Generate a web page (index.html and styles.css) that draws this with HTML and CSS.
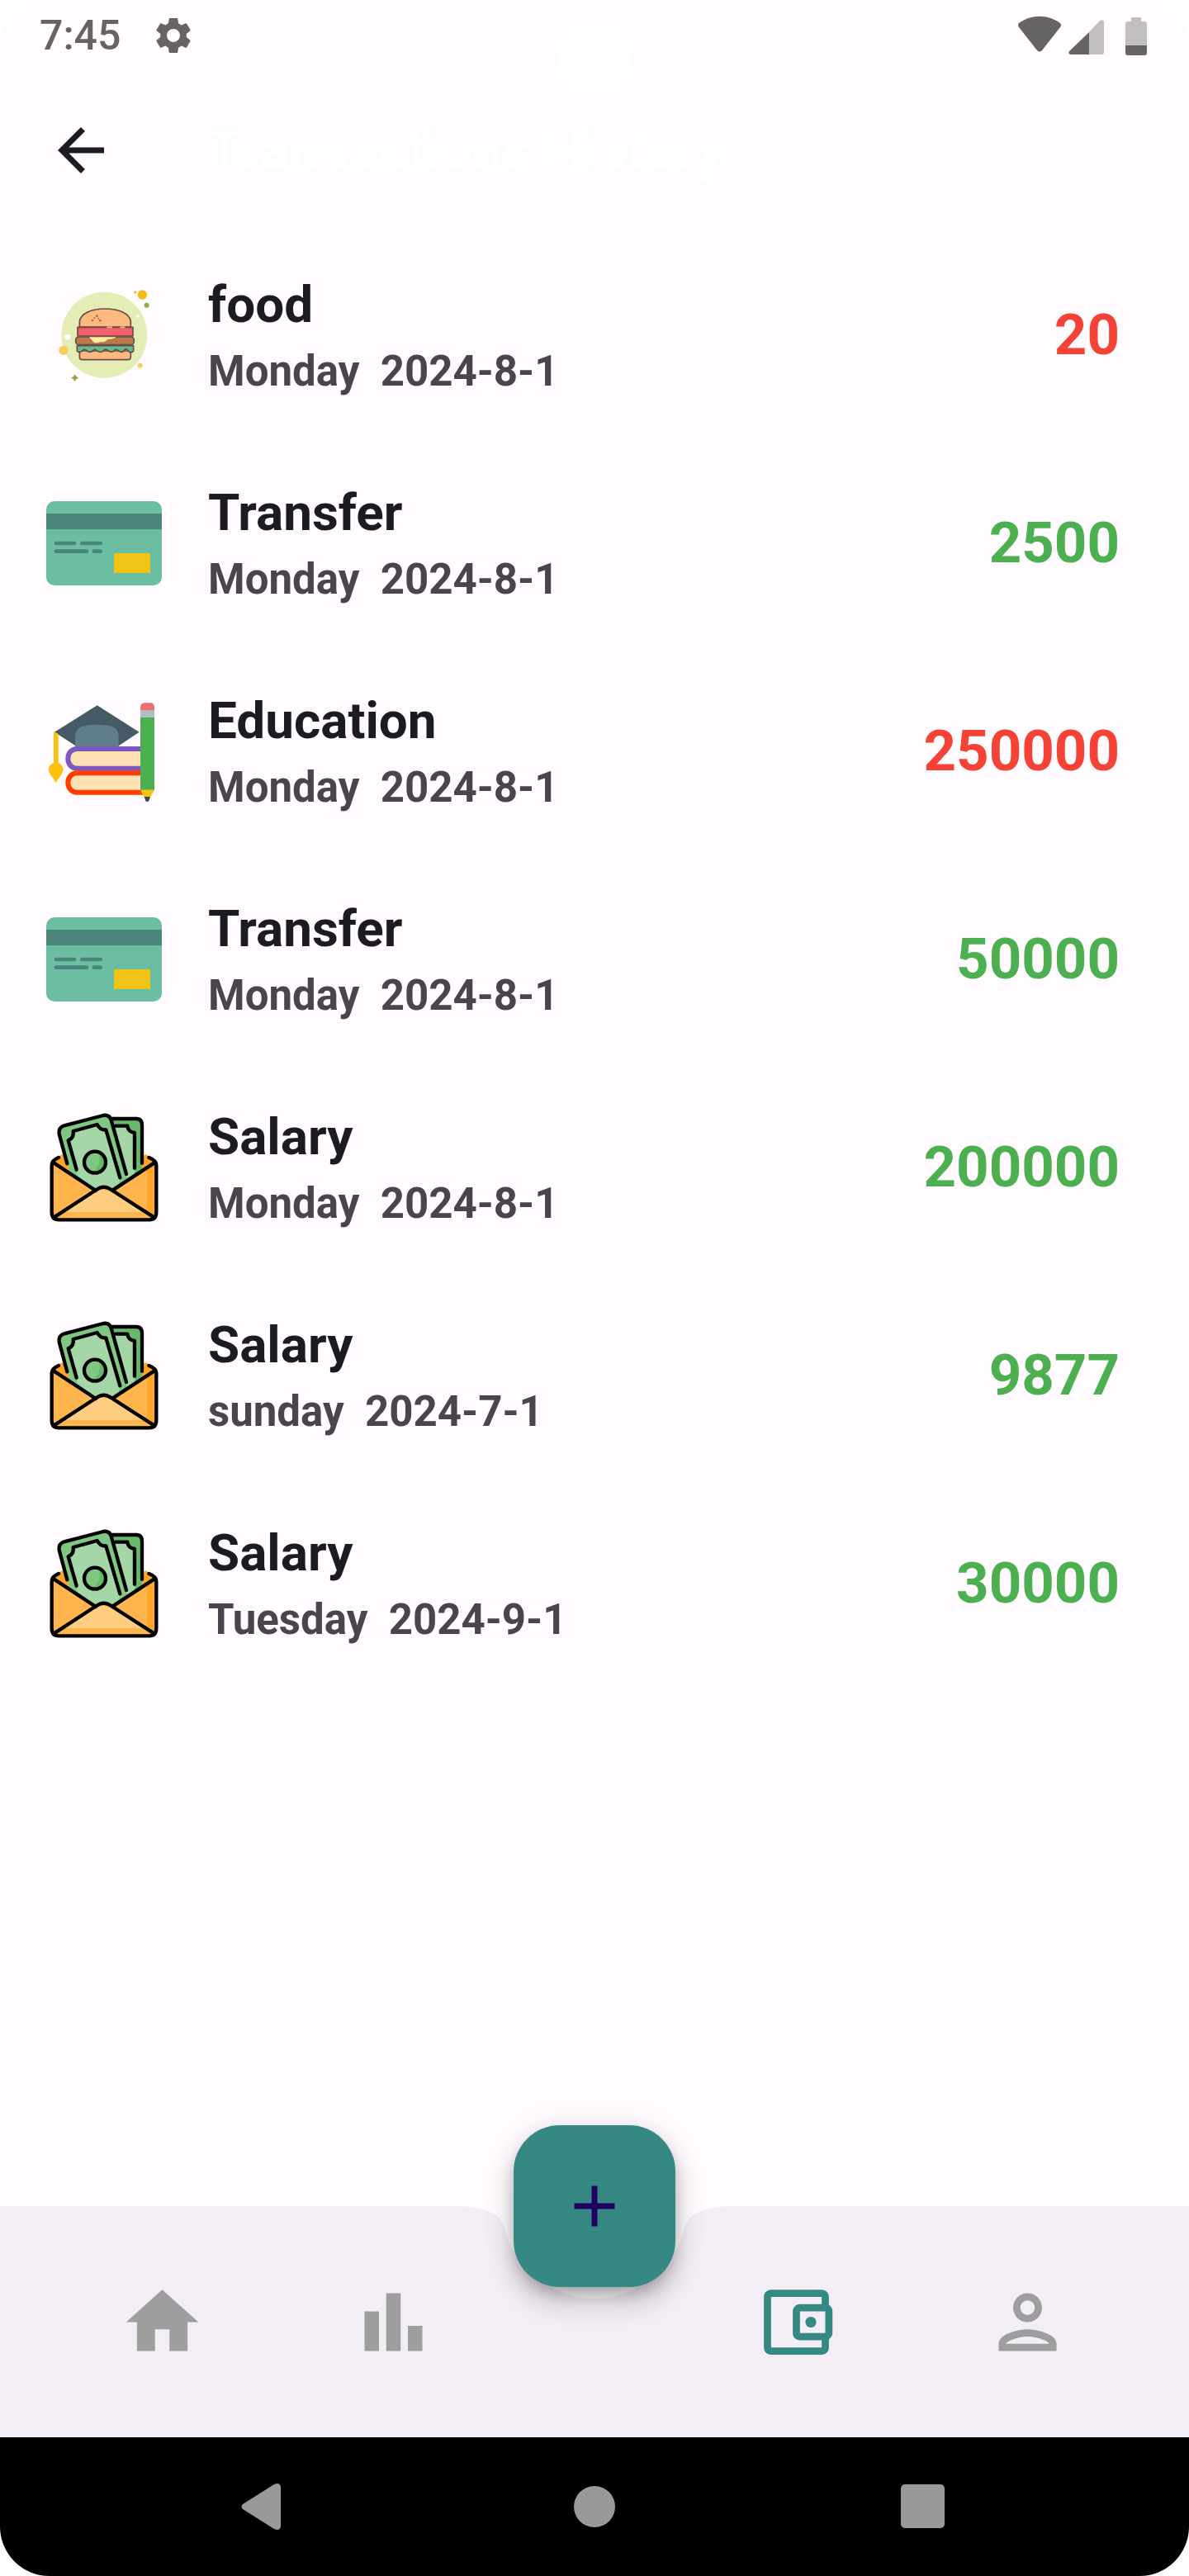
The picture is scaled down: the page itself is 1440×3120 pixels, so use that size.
FILE: index.html
```html
<!DOCTYPE html>
<html lang="en">
<head>
<meta charset="utf-8">
<meta name="viewport" content="width=device-width, initial-scale=1">
<title>Transactions History</title>
<link rel="stylesheet" href="styles.css">
</head>
<body>
<svg class="defs" aria-hidden="true">
  <symbol id="ic-food" viewBox="48 18 420 420">
    <circle cx="259" cy="227" r="156" fill="#e5edb7"/>
    <circle cx="397" cy="81" r="17" fill="#f1bc19"/>
    <circle cx="371" cy="72" r="5" fill="#f1bc19"/>
    <circle cx="413" cy="119" r="9" fill="#88ae45"/>
    <circle cx="380" cy="158" r="6" fill="#fff"/>
    <circle cx="125" cy="235" r="10" fill="#fff"/>
    <circle cx="111" cy="283" r="17" fill="#fbcd59"/>
    <circle cx="389" cy="338" r="9" fill="#fbcd59"/>
    <path d="M152 370l5 8 9 5-9 5-5 9-5-9-9-5 9-5z" fill="#88ae45"/>
    <g stroke="#6d4a48" stroke-width="5" stroke-linejoin="round">
      <path d="M169 198v-20c4-29 43-46 93-46s89 17 93 46v20z" fill="#fdb97e"/>
      <path d="M169 285h186v22q0 10-10 10H179q-10 0-10-10z" fill="#fdb97e"/>
      <path d="M160 266h205v20q-10 8-18 0-7-12-14-5-12 16-27 0-8-4-12 4-13 8-25-4-9-4-13 4-13 9-26-3-8-4-13 3-13 9-24-3-8-4-13 2-12 10-20 2z" fill="#60be92"/>
      <rect x="155" y="234" width="212" height="29" rx="12" fill="#b97948"/>
      <path d="M162 199h201v32H162z" fill="#f55e6f"/>
    </g>
    <path d="M204 235h98q-10 8-32 8-9 12-24 9-13 5-24 3z" fill="#fbee9c"/>
    <path d="M268 199h20M316 199h18" stroke="#fdb97e" stroke-width="5"/>
    <g fill="#a06a50"><circle cx="216" cy="174" r="4"/><circle cx="223" cy="165" r="3"/><circle cx="232" cy="158" r="4"/><circle cx="238" cy="167" r="3"/><circle cx="244" cy="175" r="4"/></g>
  </symbol>
  <symbol id="ic-card" viewBox="48 -6 420 420">
    <rect x="48" y="51" width="420" height="306" rx="30" fill="#6bbea2"/>
    <path d="M48 96h420v57H48z" fill="#49857a"/>
    <path d="M84 204h66M178 204h67M84 233h111M222 233h23" stroke="#49857a" stroke-width="14" stroke-linecap="round"/>
    <path d="M294 240h132v72H294z" fill="#f0c419"/>
  </symbol>
  <symbol id="ic-education" viewBox="48 30 420 420">
    <path d="M390 231H160c-44 0-44 71 0 71h230" fill="#ffe0b2" stroke="#7e57c2" stroke-width="18"/>
    <path d="M400 319H160c-44 0-44 70 0 70h240" fill="#ffe0b2" stroke="#ff3d00" stroke-width="18"/>
    <path d="M233 73L386 170 308 222H158L78 170z" fill="#455a64"/>
    <path d="M153 222v-38c4-30 20-41 79-41s76 11 79 41v38z" fill="#607d8b"/>
    <path d="M75 168l17 8v106q18 8 18 26-3 12-19 33l-8 14-8-14q-16-21-19-33 0-18 19-26z" fill="#ffc107"/>
    <path d="M390 380h51l-14 26h-24z" fill="#ffc107"/>
    <path d="M404 405h22l-6 17h-10z" fill="#37474f"/>
    <path d="M390 92V78q2-14 16-14h20q14 0 15 14v14z" fill="#e57373"/>
    <path d="M390 92h51v26h-51z" fill="#b0bec5"/>
    <path d="M390 117h51v263h-51z" fill="#4caf50"/>
  </symbol>
  <symbol id="ic-salary" viewBox="48 42 420 420">
    <path d="M68 236l34-30h308l38 30v190q-3 16-20 16H88q-17 0-20-16z" fill="#ffb54e"/>
    <path d="M68 236l38-32 30 68zM448 236l-38-32-24 66z" fill="#ffa327"/>
    <path d="M414 255l34-20v194q0 12-18 13H300l100-30q14-6 14-20z" fill="#ffa728"/>
    <path d="M284 75h92q20 2 20 24v164l-70 45z" fill="#66bb6a"/>
    <path d="M292 101h52q0 22 26 25v152l-40 22z" fill="#a5d6a7"/>
    <path d="M94 118q0-14 14-18l150-38q22-4 28 16l58 222-54 36h-62l-96-72z" fill="#81c784"/>
    <path d="M127 155q24-12 20-37l84-23q14 24 34 20l54 195-28 24h-62l-66-52z" fill="#a5d6a7"/>
    <path d="M318 290l-14 38 44-30z" fill="#81c784"/>
    <path d="M126 262l36 26-6-26z" fill="#81c784"/>
    <circle cx="225" cy="233" r="40" fill="#81c784"/>
    <path d="M234 195a40 40 0 0 1-26 76c34-10 42-52 26-76z" fill="#66bb6a"/>
    <path d="M74 438l156-104q26-22 54 0l160 104z" fill="#ffcc80"/>
    <path d="M108 414h300l34 26H76z" fill="#ffb54e"/>
    <g fill="none" stroke="#000" stroke-width="13" stroke-linecap="round" stroke-linejoin="round">
      <path d="M93 216q-25 10-25 28v170q0 28 26 28h328q26 0 26-28V244q0-18-27-28"/>
      <path d="M75 235l153 101M80 431l150-98q27-20 54 0l152 98M441 235L290 334"/>
      <path d="M124 238L95 130q-4-22 18-30l142-37q22-4 29 17l55 196"/>
      <path d="M158 260l-30-106q22-10 18-34l87-24q12 22 32 19l51 174"/>
      <path d="M287 75h90q19 1 19 24v137M301 101h42q2 22 26 25v128"/>
      <circle cx="225" cy="233" r="39"/>
    </g>
  </symbol>
</svg>

<div class="screen">
  <div class="status-bar">
    <span class="clock">7:45</span>
    <svg class="status-gear" viewBox="2 2 20 20" aria-hidden="true"><path d="M19.14 12.94c.04-.3.06-.61.06-.94 0-.32-.02-.64-.07-.94l2.03-1.58c.18-.14.23-.41.12-.61l-1.92-3.32c-.12-.22-.37-.29-.59-.22l-2.39.96c-.5-.38-1.03-.7-1.62-.94l-.36-2.54c-.04-.24-.24-.41-.48-.41h-3.84c-.24 0-.43.17-.47.41l-.36 2.54c-.59.24-1.13.57-1.62.94l-2.39-.96c-.22-.08-.47 0-.59.22L2.74 8.87c-.12.21-.08.47.12.61l2.03 1.58c-.05.3-.09.63-.09.94s.02.64.07.94l-2.03 1.58c-.18.14-.23.41-.12.61l1.92 3.32c.12.22.37.29.59.22l2.39-.96c.5.38 1.03.7 1.62.94l.36 2.54c.05.24.24.41.48.41h3.84c.24 0 .44-.17.47-.41l.36-2.54c.59-.24 1.13-.56 1.62-.94l2.39.96c.22.08.47 0 .59-.22l1.92-3.32c.12-.22.07-.47-.12-.61l-2.01-1.58zM12 15.6c-1.98 0-3.6-1.62-3.6-3.6s1.62-3.6 3.6-3.6 3.6 1.62 3.6 3.6-1.62 3.6-3.6 3.6z"/></svg>
    <svg class="status-signals" viewBox="0 0 158 48" aria-hidden="true">
      <path d="M2 9Q0 11 2 14L24 42Q27 45 30 42L52 14Q54 11 52 9C37-2 17-2 2 9z"/>
      <path class="faint" d="M87 20l13-14q5-2 5 2v36q0 3-3 3H87z"/>
      <path d="M87 20v27H65q-4-1-2-4z"/>
      <path class="faint" d="M138 2h12v5h4q3 0 3 3v26h-26V10q0-3 3-3h4z"/>
      <path d="M131 36h26v9q0 3-3 3h-20q-3 0-3-3z"/>
    </svg>
    <span class="camera" aria-hidden="true"></span>
  </div>

  <header class="app-bar">
    <button class="back" type="button" aria-label="Back"><svg viewBox="0 0 24 24" aria-hidden="true"><path d="M20 11H7.83l5.59-5.59L12 4l-8 8 8 8 1.41-1.41L7.83 13H20v-2z"/></svg></button>
    <h1>Transactions History</h1>
  </header>

  <main>
    <ul class="transactions">
      <li><svg aria-hidden="true"><use href="#ic-food"/></svg><div class="info"><h2>food</h2><p>Monday&nbsp; 2024-8-1</p></div><span class="amount expense">20</span></li>
      <li><svg aria-hidden="true"><use href="#ic-card"/></svg><div class="info"><h2>Transfer</h2><p>Monday&nbsp; 2024-8-1</p></div><span class="amount income">2500</span></li>
      <li><svg aria-hidden="true"><use href="#ic-education"/></svg><div class="info"><h2>Education</h2><p>Monday&nbsp; 2024-8-1</p></div><span class="amount expense">250000</span></li>
      <li><svg aria-hidden="true"><use href="#ic-card"/></svg><div class="info"><h2>Transfer</h2><p>Monday&nbsp; 2024-8-1</p></div><span class="amount income">50000</span></li>
      <li><svg aria-hidden="true"><use href="#ic-salary"/></svg><div class="info"><h2>Salary</h2><p>Monday&nbsp; 2024-8-1</p></div><span class="amount income">200000</span></li>
      <li><svg aria-hidden="true"><use href="#ic-salary"/></svg><div class="info"><h2>Salary</h2><p>sunday&nbsp; 2024-7-1</p></div><span class="amount income">9877</span></li>
      <li><svg aria-hidden="true"><use href="#ic-salary"/></svg><div class="info"><h2>Salary</h2><p>Tuesday&nbsp; 2024-9-1</p></div><span class="amount income">30000</span></li>
    </ul>
  </main>

  <nav class="bottom-bar" aria-label="Main">
    <svg class="notch" viewBox="0 0 336 112" aria-hidden="true"><path d="M0 0Q52.500 0 59.400 27.400A112 112 0 0 0 276.600 27.400Q283.500 0 336 0z"/></svg>
    <a href="#home" aria-label="Home"><svg viewBox="0 0 24 24"><path d="M10 20v-6h4v6h5v-8h3L12 3 2 12h3v8z"/></svg></a>
    <a href="#statistics" aria-label="Statistics"><svg viewBox="0 0 24 24"><path d="M4 9h4v11H4zm12 4h4v7h-4zm-6-9h4v16h-4z"/></svg></a>
    <span class="fab-space"></span>
    <a class="active" href="#wallet" aria-label="Wallet" aria-current="page"><svg viewBox="0 0 24 24"><path d="M21 7.280V5c0-1.100-.9-2-2-2H5c-1.110 0-2 .9-2 2v14c0 1.100.89 2 2 2h14c1.100 0 2-.9 2-2v-2.280c.59-.35 1-.98 1-1.720V9c0-.74-.41-1.370-1-1.720zM20 9v6h-7V9h7zM5 19V5h14v2h-6c-1.100 0-2 .9-2 2v6c0 1.100.9 2 2 2h6v2H5z"/><circle cx="16" cy="12" r="1.500"/></svg></a>
    <a href="#profile" aria-label="Profile"><svg viewBox="0 0 24 24"><path d="M12 6c1.100 0 2 .9 2 2s-.9 2-2 2-2-.9-2-2 .9-2 2-2m0 10c2.700 0 5.800 1.290 6 2H6c.23-.72 3.310-2 6-2m0-12C9.790 4 8 5.790 8 8s1.790 4 4 4 4-1.790 4-4-1.790-4-4-4zm0 10c-2.670 0-8 1.340-8 4v2h16v-2c0-2.660-5.330-4-8-4z"/></svg></a>
    <button class="fab" type="button" aria-label="Add transaction"><svg viewBox="0 0 24 24"><path d="M19 13h-6v6h-2v-6H5v-2h6V5h2v6h6v2z"/></svg></button>
  </nav>

  <div class="system-nav">
    <button type="button" aria-label="System back"><svg viewBox="0 0 56 56"><path d="M0 25L38 1Q45-2 46 4V52Q45 58 38 55L0 31Q-3 28 0 25z"/></svg></button>
    <button type="button" aria-label="System home"><svg viewBox="0 0 56 56"><circle cx="28" cy="28" r="25"/></svg></button>
    <button type="button" aria-label="Recent apps"><svg viewBox="0 0 56 56"><rect x="1" y="1" width="53" height="53" rx="5"/></svg></button>
  </div>
</div>
</body>
</html>
```
FILE: styles.css
```css
*,
*::before,
*::after {
  box-sizing: border-box;
}

body {
  margin: 0;
  background: #fff;
  font-family: Roboto, sans-serif;
  color: #1c1b1f;
}

h1, h2, p, ul {
  margin: 0;
  padding: 0;
}

button {
  border: 0;
  padding: 0;
  background: none;
  cursor: pointer;
}

svg {
  display: block;
  fill: currentColor;
  overflow: visible;
}

.defs {
  position: absolute;
  width: 0;
  height: 0;
}

.screen {
  display: flex;
  flex-direction: column;
  min-height: 100vh;
  overflow: hidden;
  border-radius: 60px;
  background: #fffbff;
}

.status-bar {
  position: relative;
  display: flex;
  align-items: center;
  height: 84px;
  padding: 2px 50px 0 48px;
  color: #666366;
}

.clock {
  font-size: 50px;
  font-weight: 500;
  line-height: 84px;
}

.status-gear {
  width: 44px;
  height: 44px;
  margin-left: 42px;
}

.status-signals {
  width: 158px;
  height: 48px;
  margin-left: auto;
}

.faint {
  fill: #c1bfc1;
}

.camera {
  position: absolute;
  top: 29px;
  left: 50%;
  width: 86px;
  height: 86px;
  margin-left: -43px;
  border-radius: 50%;
  background: #fff;
}

.app-bar {
  display: flex;
  align-items: center;
  gap: 56px;
  height: 196px;
  padding: 0 56px;
}

.back {
  width: 140px;
}

.back svg {
  width: 84px;
  height: 84px;
  color: #1c1b1f;
}

h1 {
  font-size: 67px;
  line-height: 84px;
  font-weight: 700;
  color: #fff;
}

main {
  flex: 1;
}

.transactions {
  list-style: none;
}

.transactions li {
  display: flex;
  align-items: center;
  gap: 56px;
  height: 252px;
  padding: 0 84px 0 56px;
}

.transactions svg {
  width: 140px;
  height: 140px;
  flex: none;
}

.info {
  display: flex;
  flex-direction: column;
  flex: 1;
  gap: 4px;
}

h2 {
  font-size: 62px;
  line-height: 84px;
  font-weight: 700;
}

.info p {
  font-size: 51px;
  line-height: 70px;
  font-weight: 700;
  color: #49454f;
}

.amount {
  font-size: 69px;
  line-height: 84px;
  font-weight: 700;
}

.expense {
  color: #f44336;
}

.income {
  color: #4caf50;
}

.bottom-bar {
  position: relative;
  display: flex;
  align-items: center;
  height: 280px;
  padding: 0 56px;
  background: #f3edf5;
}

.bottom-bar a {
  display: flex;
  flex: 1;
  justify-content: center;
  color: #9e9e9e;
}

.bottom-bar a svg {
  width: 105px;
  height: 105px;
}

.bottom-bar .active {
  color: #368983;
}

.fab-space {
  flex: 0 0 208px;
}

.notch {
  position: absolute;
  top: 0;
  left: 50%;
  width: 336px;
  height: 112px;
  margin-left: -168px;
  color: #fffbff;
}

.fab {
  position: absolute;
  top: -98px;
  left: 50%;
  display: grid;
  place-items: center;
  width: 196px;
  height: 196px;
  margin-left: -98px;
  border-radius: 56px;
  background: #368983;
  color: #21005d;
  box-shadow: 0 10px 17px -3px rgba(0, 0, 0, .2), 0 21px 35px rgba(0, 0, 0, .14), 0 3px 40px rgba(0, 0, 0, .1);
}

.fab svg {
  width: 84px;
  height: 84px;
}

.system-nav {
  display: flex;
  align-items: center;
  height: 168px;
  padding: 0 123px;
  background: #000;
}

.system-nav button {
  display: flex;
  flex: 1;
  justify-content: center;
  color: #999;
}

.system-nav svg {
  width: 56px;
  height: 56px;
}
```
